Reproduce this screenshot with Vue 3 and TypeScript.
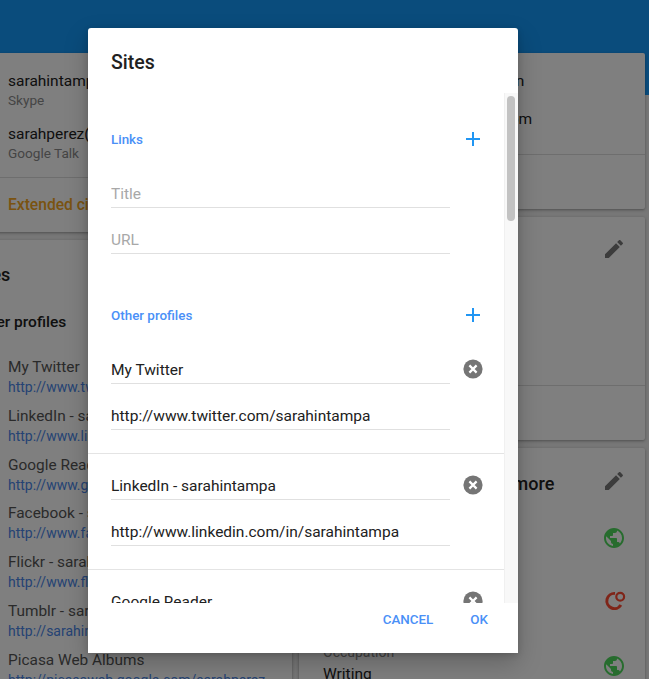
<template>
  <div class="page">
    <div class="top-bar" />

    <div class="columns">
      <div class="col col-left">
        <section class="card">
          <div class="contacts">
            <div v-for="c in contacts" :key="c.name" class="contact">
              <div class="contact-name">{{ c.name }}</div>
              <div class="contact-type">{{ c.type }}</div>
            </div>
          </div>
          <div class="circles-row">Extended circles</div>
        </section>

        <section class="card sites-card">
          <h2 class="sites-title">Sites</h2>
          <h3 class="sites-sub">Other profiles</h3>
          <div v-for="s in siteList" :key="s.title" class="site">
            <div class="site-title">{{ s.title }}</div>
            <div class="site-url">{{ s.url }}</div>
          </div>
        </section>
      </div>

      <div class="col col-right">
        <section class="card">
          <div class="emails">
            <div class="email">sarahintampa12@example.in</div>
            <div class="email">sarah_intampa@example.com</div>
          </div>
          <div class="card-foot" />
        </section>

        <section class="card card-tall">
          <div class="pencil-row">
            <svg class="pencil" viewBox="0 0 24 24"><path :d="pencilPath" /></svg>
          </div>
          <div class="card-foot foot-tall" />
        </section>

        <section class="card about-card">
          <div class="about-head">
            <h2 class="about-title">Careers, education and more</h2>
            <svg class="pencil" viewBox="0 0 24 24"><path :d="pencilPath" /></svg>
          </div>
          <div class="about-row">
            <svg class="globe" viewBox="0 0 24 24"><path :d="globePath" /></svg>
          </div>
          <div class="about-row">
            <svg class="ring" viewBox="0 0 24 24">
              <path d="M13 3.4A7.6 7.6 0 1 0 18.9 15" />
              <circle class="ring-dot" cx="18.2" cy="6.8" r="3.9" />
            </svg>
          </div>
          <div class="about-row">
            <div class="about-text">
              <div class="about-label">Occupation</div>
              <div class="about-value">Writing</div>
            </div>
            <svg class="globe" viewBox="0 0 24 24"><path :d="globePath" /></svg>
          </div>
        </section>
      </div>
    </div>

    <div class="scrim">
      <div class="dialog">
        <h1 class="dialog-title">Sites</h1>

        <div class="dialog-mid">
          <div class="dialog-body">
            <div class="group-head">
              <span>Links</span>
              <button class="add" aria-label="Add link">
                <svg viewBox="0 0 14 14"><path d="M7 0v14M0 7h14" /></svg>
              </button>
            </div>
            <div class="entry entry-plain">
              <div class="fields">
                <input v-model="linkTitle" class="field" placeholder="Title" />
                <input v-model="linkUrl" class="field" placeholder="URL" />
              </div>
            </div>

            <div class="group-head group-second">
              <span>Other profiles</span>
              <button class="add" aria-label="Add profile">
                <svg viewBox="0 0 14 14"><path d="M7 0v14M0 7h14" /></svg>
              </button>
            </div>
            <div v-for="s in profiles" :key="s.title" class="entry">
              <div class="fields">
                <input v-model="s.title" class="field" />
                <input v-model="s.url" class="field" />
              </div>
              <button class="remove" aria-label="Remove">
                <svg viewBox="0 0 20 20">
                  <circle cx="10" cy="10" r="9.6" />
                  <path d="M6.4 6.4l7.2 7.2M13.6 6.4l-7.2 7.2" />
                </svg>
              </button>
            </div>
          </div>

          <div class="scroll-track"><div class="scroll-thumb" /></div>
        </div>

        <div class="dialog-foot">
          <button class="action">Cancel</button>
          <button class="action">OK</button>
        </div>
      </div>
    </div>
  </div>
</template>

<script setup lang="ts">
import { reactive, ref } from 'vue'

const pencilPath =
  'M3 17.25V21h3.75L17.81 9.94l-3.75-3.75L3 17.25zM20.71 7.04c.39-.39.39-1.02 0-1.41l-2.34-2.34c-.39-.39-1.02-.39-1.41 0l-1.83 1.83 3.75 3.75 1.83-1.83z'
const globePath =
  'M12 2C6.48 2 2 6.48 2 12s4.48 10 10 10 10-4.48 10-10S17.52 2 12 2zm-1 17.93c-3.95-.49-7-3.85-7-7.93 0-.62.08-1.21.21-1.79L9 15v1c0 1.1.9 2 2 2v1.93zm6.9-2.54c-.26-.81-1-1.39-1.9-1.39h-1v-3c0-.55-.45-1-1-1H8v-2h2c.55 0 1-.45 1-1V7h2c1.1 0 2-.9 2-2v-.41c2.93 1.19 5 4.06 5 7.41 0 2.08-.8 3.97-2.1 5.39z'

const contacts = [
  { name: 'sarahintampa', type: 'Skype' },
  { name: 'sarahperez(at)gmail', type: 'Google Talk' },
]

const siteList = [
  { title: 'My Twitter', url: 'http://www.twitter.com/sarahintampa' },
  { title: 'LinkedIn - sarahintampa', url: 'http://www.linkedin.com/in/sarahintampa' },
  { title: 'Google Reader', url: 'http://www.google.com/reader/shared' },
  { title: 'Facebook - sarahintampa', url: 'http://www.facebook.com/sarahintampa' },
  { title: 'Flickr - sarahintampa', url: 'http://www.flickr.com/photos/sarahintampa' },
  { title: 'Tumblr - sarahintampa', url: 'http://sarahintampa.tumblr.com' },
  { title: 'Picasa Web Albums', url: 'http://picasaweb.google.com/sarahperez' },
]

const linkTitle = ref('')
const linkUrl = ref('')

const profiles = reactive([
  { title: 'My Twitter', url: 'http://www.twitter.com/sarahintampa' },
  { title: 'LinkedIn - sarahintampa', url: 'http://www.linkedin.com/in/sarahintampa' },
  { title: 'Google Reader', url: 'http://www.google.com/reader/shared' },
])
</script>

<style>
html,
body {
  height: 100%;
  overflow: hidden;
  background: #eeeeee;
}
</style>

<style scoped>
.page {
  position: relative;
  width: 649px;
  height: 679px;
  overflow: hidden;
  font-family: Roboto, "Liberation Sans", sans-serif;
  color: #212121;
  background: #eeeeee;
}

.top-bar {
  height: 95px;
  background: #1598f8;
}

.columns {
  display: flex;
  gap: 7px;
  width: 661px;
  margin: -42px 0 0 -16px;
}

.col {
  display: flex;
  flex-direction: column;
  gap: 8px;
}
.col-left { width: 308px; flex: none; }
.col-right { width: 346px; flex: none; }

.card {
  background: #fff;
  box-shadow: 0 1px 3px rgba(0, 0, 0, 0.35);
  border-radius: 2px;
}

/* left column */
.contacts {
  display: flex;
  flex-direction: column;
  gap: 14px;
  padding: 18px 0 14px 24px;
  border-bottom: 1px solid #ddd;
}
.contact-name { font-size: 15.5px; line-height: 20px; }
.contact-type { font-size: 13.6px; line-height: 19px; color: #8a8a8a; }
.circles-row {
  height: 54px;
  line-height: 54px;
  padding-left: 24px;
  font-size: 15.6px;
  font-weight: 500;
  color: #f5a623;
}

.sites-card { padding: 25px 0 0 24px; }
.sites-title {
  margin: 0 0 0 -38px;
  font-size: 18px;
  line-height: 20px;
  font-weight: 500;
}
.sites-sub {
  margin: 27px 0 25px -36px;
  font-size: 15.5px;
  line-height: 20px;
  font-weight: 500;
}
.site { height: 48.8px; }
.site-title { font-size: 15.4px; line-height: 20px; color: #555; white-space: nowrap; }
.site-url { font-size: 14px; line-height: 20px; color: #4a86e8; white-space: nowrap; }

/* right column */
.emails {
  display: flex;
  flex-direction: column;
  gap: 18px;
  padding: 18px 0 25px 24px;
}
.email { font-size: 15.5px; line-height: 20px; white-space: nowrap; }
.card-foot { height: 54px; border-top: 1px solid #ddd; }

.card-tall { height: 223px; display: flex; flex-direction: column; }
.pencil-row { flex: 1; display: flex; justify-content: flex-end; padding: 20px 19px 0 0; }
.foot-tall { flex: none; }

.pencil { width: 24px; height: 24px; fill: #787878; flex: none; }
.globe { width: 24px; height: 24px; fill: #4ed85c; flex: none; }
.ring { width: 24px; height: 24px; fill: none; stroke: #ff4a32; stroke-width: 3; flex: none; }
.ring-dot { stroke-width: 2.2; }

.about-head {
  display: flex;
  align-items: center;
  justify-content: space-between;
  height: 66px;
  margin-bottom: -8px;
  padding: 0 19px 0 24px;
}
.about-title { margin: 4px 0 0; font-size: 18px; font-weight: 500; }
.about-row {
  display: flex;
  align-items: center;
  justify-content: flex-end;
  height: 64px;
  padding-right: 19px;
}
.about-text { flex: 1; padding-left: 24px; margin-top: -4px; }
.about-label { font-size: 14px; line-height: 20px; color: #8a8a8a; }
.about-value { font-size: 15.5px; line-height: 24px; }

/* dialog */
.scrim {
  position: absolute;
  inset: 0;
  background: rgba(0, 0, 0, 0.5);
}

.dialog {
  position: absolute;
  left: 88px;
  top: 28px;
  width: 430px;
  height: 625px;
  display: flex;
  flex-direction: column;
  background: #fff;
  border-radius: 3px;
  box-shadow: 0 10px 24px rgba(0, 0, 0, 0.22), 0 2px 6px rgba(0, 0, 0, 0.15);
}

.dialog-title {
  flex: none;
  height: 65px;
  margin: 0;
  padding: 23px 0 0 23px;
  box-sizing: border-box;
  font-size: 19.5px;
  line-height: 24px;
  font-weight: 500;
  color: #212121;
}

.dialog-mid {
  flex: 1;
  min-height: 0;
  display: flex;
}

.dialog-body {
  flex: 1;
  min-width: 0;
  overflow: hidden;
  padding-top: 28px;
}

.group-head {
  display: flex;
  align-items: center;
  justify-content: space-between;
  height: 36px;
  padding: 0 24px 0 23px;
  font-size: 13.4px;
  font-weight: 500;
  color: #4a90f7;
}
.group-second { margin-top: 43px; }

.add {
  width: 14px;
  height: 14px;
  padding: 0;
  border: 0;
  background: none;
}
.add svg {
  display: block;
  width: 14px;
  height: 14px;
  fill: none;
  stroke: #2196f3;
  stroke-width: 2;
}

.entry {
  display: flex;
  align-items: flex-start;
  padding: 0 21px 23px 23px;
  border-bottom: 1px solid #e4e4e4;
}
.entry:last-child { border-bottom: 0; }
.entry-plain { padding-bottom: 0; border-bottom: 0; }
.group-head + .entry { margin-top: 5px; }

.fields {
  width: 339px;
  display: flex;
  flex-direction: column;
}

.field {
  display: block;
  width: 100%;
  height: 46px;
  box-sizing: border-box;
  padding: 18px 0 0;
  line-height: 25px;
  border: 0;
  border-bottom: 1px solid #e0e0e0;
  outline: 0;
  background: none;
  font-family: inherit;
  font-size: 15.5px;
  color: #212121;
}
.field::placeholder { color: #a8a8a8; opacity: 1; }

.remove {
  width: 20px;
  height: 20px;
  margin: 21px 0 0 13px;
  padding: 0;
  border: 0;
  background: none;
  flex: none;
}
.remove svg { display: block; width: 20px; height: 20px; }
.remove circle { fill: #757575; }
.remove path { fill: none; stroke: #fff; stroke-width: 2.2; }

.scroll-track {
  flex: none;
  width: 14px;
  background: #f8f8f8;
  border-left: 1px solid #f0f0f0;
  box-sizing: border-box;
  padding: 3px 3px 0 2px;
}
.scroll-thumb {
  height: 125px;
  border-radius: 4px;
  background: #c2c2c2;
}

.dialog-foot {
  flex: none;
  height: 50px;
  display: flex;
  justify-content: flex-end;
  align-items: flex-start;
  gap: 37px;
  padding: 6px 30px 0 0;
  box-sizing: border-box;
  background: #fff;
}

.action {
  padding: 0;
  height: 20px;
  border: 0;
  background: none;
  font-family: inherit;
  font-size: 13.4px;
  font-weight: 500;
  text-transform: uppercase;
  color: #4a90f7;
}
</style>
